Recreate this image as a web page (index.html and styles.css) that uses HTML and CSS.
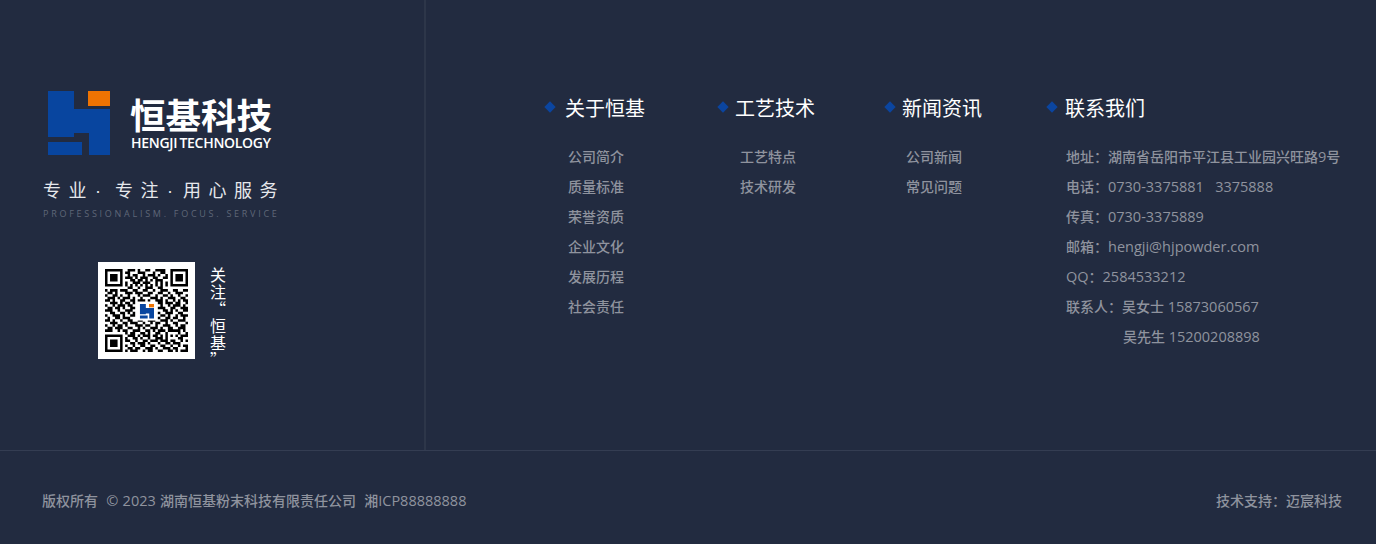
FILE: index.html
```html
<!DOCTYPE html>
<html lang="zh-CN">
<head>
<meta charset="utf-8">
<title>恒基科技</title>
<link rel="stylesheet" href="styles.css">
</head>
<body>
<footer class="footer">
  <div class="main">
    <aside class="brand">
      <div class="logo">
        <svg class="logo-mark" width="62" height="64" viewBox="0 0 62 64"><path class="blue" d="M0 0H26V18H62V64H41V42H26V46H0ZM0 51H34V64H0Z"/><path class="orange" d="M40 0H62V15H40Z"/></svg>
        <div class="logo-text"><div class="logo-cn">恒基科技</div><div class="logo-en">HENGJI TECHNOLOGY</div></div>
      </div>
      <div class="slogan">专业<span class="dot">·</span>专注<span class="dot">·</span>用心服务</div>
      <div class="slogan-en">PROFESSIONALISM. FOCUS. SERVICE</div>
      <div class="qr-row">
        <div class="qr">
          <svg class="qr-code" width="83" height="83" viewBox="0 0 33 33">
            <path fill-rule="evenodd" d="M0 0h7v7H0zM1 1v5h5V1zM2 2h3v3H2zM26 0h7v7h-7zM27 1v5h5V1zM28 2h3v3h-3zM0 26h7v7H0zM1 27v5h5v-5zM2 28h3v3H2z"/>
            <path class="qr-data" d="M9 .5h3M13 .5h1M16 .5h2M20 .5h4
            M8 1.5h2M13 1.5h3M19 1.5h1M22 1.5h2
            M9 2.5h1M11 2.5h2M15 2.5h1M17 2.5h3M21 2.5h1M24 2.5h1
            M8 3.5h3M12 3.5h1M14 3.5h3M19 3.5h2M23 3.5h2
            M10 4.5h2M13 4.5h2M16 4.5h1M18 4.5h1M20 4.5h3
            M8 5.5h1M11 5.5h3M15 5.5h3M20 5.5h1M22 5.5h1M24 5.5h1
            M8 6.5h1M10 6.5h1M12 6.5h1M14 6.5h1M16 6.5h1M18 6.5h1M20 6.5h1M22 6.5h1M24 6.5h1
            M9 7.5h2M13 7.5h1M16 7.5h3M21 7.5h2
            M0 8.5h1M2 8.5h3M6 8.5h3M11 8.5h2M15 8.5h2M19 8.5h1M22 8.5h3M27 8.5h2M31 8.5h2
            M1 9.5h2M4 9.5h1M8 9.5h3M12 9.5h3M17 9.5h2M21 9.5h2M25 9.5h1M28 9.5h3
            M0 10.5h1M3 10.5h2M6 10.5h1M9 10.5h1M13 10.5h1M15 10.5h3M20 10.5h1M23 10.5h2M26 10.5h1M29 10.5h1M32 10.5h1
            M1 11.5h3M5 11.5h1M7 11.5h3M11 11.5h1M14 11.5h1M18 11.5h3M22 11.5h1M25 11.5h3M30 11.5h2
            M0 12.5h2M3 12.5h1M6 12.5h2M10 12.5h2M13 12.5h3M17 12.5h1M20 12.5h3M24 12.5h1M27 12.5h1M29 12.5h1M31 12.5h2
            M2 13.5h3M6 13.5h1M8 13.5h2M11 13.5h1M21 13.5h2M24 13.5h3M28 13.5h2M32 13.5h1
            M0 14.5h1M3 14.5h1M5 14.5h3M9 14.5h2M22 14.5h1M25 14.5h1M27 14.5h3M31 14.5h1
            M1 15.5h2M4 15.5h2M7 15.5h1M10 15.5h2M21 15.5h3M26 15.5h2M30 15.5h3
            M0 16.5h3M5 16.5h1M8 16.5h3M23 16.5h2M26 16.5h1M28 16.5h1M31 16.5h2
            M2 17.5h2M6 17.5h2M9 17.5h1M11 17.5h1M21 17.5h1M24 17.5h3M29 17.5h2
            M0 18.5h1M3 18.5h3M7 18.5h1M10 18.5h2M22 18.5h2M25 18.5h1M28 18.5h1M30 18.5h3
            M1 19.5h1M4 19.5h2M7 19.5h3M21 19.5h1M24 19.5h2M27 19.5h2M31 19.5h1
            M0 20.5h2M3 20.5h1M6 20.5h1M9 20.5h2M13 20.5h2M17 20.5h3M22 20.5h3M26 20.5h1M29 20.5h3
            M2 21.5h3M7 21.5h2M10 21.5h3M15 21.5h1M18 21.5h1M20 21.5h2M24 21.5h1M27 21.5h2M32 21.5h1
            M0 22.5h1M3 22.5h1M5 22.5h2M8 22.5h1M12 22.5h3M16 22.5h2M20 22.5h1M23 22.5h3M28 22.5h1M30 22.5h2
            M1 23.5h2M4 23.5h3M9 23.5h2M13 23.5h1M15 23.5h1M18 23.5h3M22 23.5h1M25 23.5h2M29 23.5h3
            M0 24.5h3M5 24.5h1M7 24.5h2M11 24.5h3M16 24.5h2M19 24.5h1M21 24.5h3M25 24.5h5M31 24.5h1
            M8 25.5h1M10 25.5h2M14 25.5h2M17 25.5h1M20 25.5h2M24 25.5h1M29 25.5h1M32 25.5h1
            M9 26.5h3M13 26.5h1M15 26.5h3M19 26.5h2M22 26.5h1M24 26.5h1M26 26.5h1M28 26.5h1M30 26.5h3
            M8 27.5h1M11 27.5h2M14 27.5h1M17 27.5h1M20 27.5h3M24 27.5h1M29 27.5h2
            M8 28.5h2M12 28.5h1M15 28.5h2M18 28.5h3M22 28.5h3M26 28.5h2M30 28.5h1M32 28.5h1
            M10 29.5h2M13 29.5h3M17 29.5h1M21 29.5h1M24 29.5h2M27 29.5h3
            M8 30.5h1M11 30.5h1M14 30.5h2M18 30.5h2M22 30.5h2M26 30.5h1M29 30.5h1M31 30.5h2
            M9 31.5h2M12 31.5h2M16 31.5h3M20 31.5h1M23 31.5h3M27 31.5h2M32 31.5h1
            M8 32.5h1M10 32.5h3M15 32.5h1M17 32.5h2M21 32.5h2M25 32.5h2M28 32.5h1M30 32.5h3"/>
            <rect class="qr-hole" x="12.5" y="13" width="8" height="7.5"/>
            <g transform="translate(13.9 13.9) scale(.09)"><path class="blue" d="M0 0H26V18H62V64H41V42H26V46H0ZM0 51H34V64H0Z"/><path class="orange" d="M40 0H62V15H40Z"/></g>
          </svg>
        </div>
        <div class="qr-label">关注“恒基”</div>
      </div>
    </aside>
    <nav class="links">
      <section class="col col-about"><h3 class="col-title">关于恒基</h3><ul class="list"><li>公司简介</li><li>质量标准</li><li>荣誉资质</li><li>企业文化</li><li>发展历程</li><li>社会责任</li></ul></section>
      <section class="col col-tech"><h3 class="col-title">工艺技术</h3><ul class="list"><li>工艺特点</li><li>技术研发</li></ul></section>
      <section class="col col-news"><h3 class="col-title">新闻资讯</h3><ul class="list"><li>公司新闻</li><li>常见问题</li></ul></section>
      <section class="col col-contact"><h3 class="col-title">联系我们</h3><ul class="list"><li>地址：湖南省岳阳市平江县工业园兴旺路<span class="lat">9</span>号</li><li>电话：<span class="lat">0730-3375881 &nbsp; 3375888</span></li><li>传真：<span class="lat">0730-3375889</span></li><li>邮箱：<span class="lat">hengji@hjpowder.com</span></li><li><span class="lat">QQ</span>：<span class="lat">2584533212</span></li><li>联系人：吴女士 <span class="lat">15873060567</span></li><li class="indent">吴先生 <span class="lat">15200208898</span></li></ul></section>
    </nav>
  </div>
  <div class="bottom"><div>版权所有 &nbsp;<span class="lat">© 2023</span> 湖南恒基粉末科技有限责任公司 &nbsp;湘<span class="lat">ICP88888888</span></div><div>技术支持：迈宸科技</div></div>
</footer>
</body>
</html>
```
FILE: styles.css
```css
*{box-sizing:border-box;margin:0;padding:0}
html,body{height:100%}
body{background:#222b40;font-family:"Open Sans","Noto Sans CJK SC",sans-serif;overflow:hidden}
.footer{width:1376px;height:544px;display:flex;flex-direction:column}
.main{height:451px;display:flex;border-bottom:1px solid #343d52}
.brand{width:426px;border-right:2px solid #2d3649;padding:91px 0 0 43px}
.blue{fill:#08459f}
.orange{fill:#ee7302}
.logo{display:flex;margin-left:5px;gap:20px;height:64px}
.logo-text{color:#fff}
.logo-cn{font-family:"Noto Sans CJK SC",sans-serif;font-size:35.5px;font-weight:700;line-height:44px;margin-top:1px}
.logo-en{font-size:14px;font-weight:600;letter-spacing:-.3px;word-spacing:-1px;line-height:14px;margin-left:1px;white-space:nowrap}
.slogan{margin-top:21px;font-family:"Noto Sans CJK SC",sans-serif;font-size:18px;line-height:26px;letter-spacing:7.5px;color:#e6e8ec;white-space:nowrap}
.dot{display:inline-block;width:21px;padding-left:1px;letter-spacing:0;font-family:"Liberation Sans",sans-serif}
.dot~.dot{width:17px}
.slogan-en{margin-top:4px;font-size:9px;line-height:12px;letter-spacing:2.73px;color:#5f6778;white-space:nowrap}
.qr-row{display:flex;margin:42px 0 0 55px;gap:15px}
.qr{width:97px;height:97px;background:#fff;padding:7px}
.qr-code{display:block}
.qr-data{fill:none;stroke:#000;stroke-width:1}
.qr-hole{fill:#fff}
.qr-label{width:16px;height:112px;margin-top:4px;font-family:"Noto Sans CJK SC",sans-serif;font-size:16px;line-height:17px;line-break:anywhere;word-break:break-all;color:#fff}
.links{flex:1;display:flex;padding:96px 0 0 0}
.col{flex:none}
.col-about{margin-left:120px;width:173px}
.col-tech{width:167px}
.col-news{width:162px}
.col-title{font-size:20px;font-weight:400;line-height:26px;color:#fff;padding-left:16px;position:relative}
.col-about .col-title{padding-left:19px}
.col-contact .col-title{padding-left:17px}
.col-title::before{content:"";position:absolute;left:0;top:7px;width:8px;height:8px;background:#0b459f;transform:rotate(45deg)}
.list{list-style:none;margin-top:20px;color:#8f939e;font-size:14px;font-weight:500;line-height:30px}
.col-about .list{padding-left:22px}
.col-tech .list{padding-left:21px}
.col-news .list{padding-left:20px}
.col-contact .list{padding-left:18px}
.indent{padding-left:57px}
.lat{font-size:14.5px;line-height:1}
.bottom{flex:1;display:flex;justify-content:space-between;align-items:center;padding:4px 34px 0 42px;font-size:14px;font-weight:500;word-spacing:.5px;color:#8f939e}
```
